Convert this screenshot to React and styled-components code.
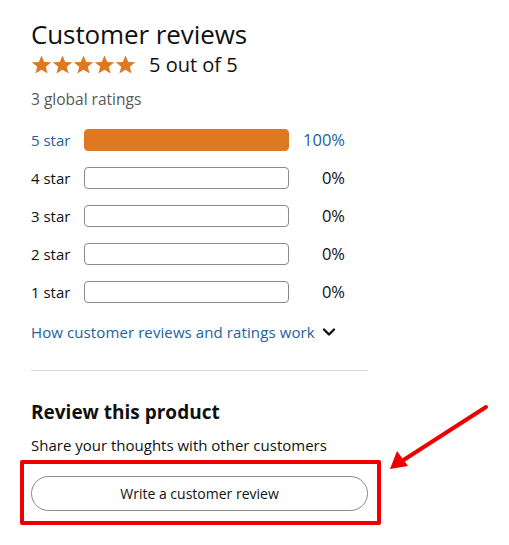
import React from "react";
import styled, { createGlobalStyle } from "styled-components";

const GlobalStyle = createGlobalStyle`
  html, body {
    margin: 0;
    padding: 0;
    background: #fff;
  }
  body {
    font-family: "Open Sans", "Noto Sans", "Liberation Sans", sans-serif;
    color: #0f1111;
  }
`;

const Page = styled.div`
  position: relative;
  width: 509px;
  height: 545px;
  overflow: hidden;
`;

const Column = styled.div`
  width: 337px;
  padding: 16px 0 0 31px;
  display: flex;
  flex-direction: column;
`;

const Title = styled.h2`
  margin: 0;
  font-size: 26px;
  font-weight: 400;
  line-height: 36px;
  letter-spacing: -0.1px;
`;

const StarLine = styled.div`
  display: flex;
  align-items: center;
  height: 24px;
  margin-top: 1px;
`;

const Stars = styled.div`
  display: flex;
  margin-right: 13px;
`;

const Score = styled.span`
  font-size: 20px;
  line-height: 24px;
`;

const Global = styled.div`
  margin-top: 12px;
  font-size: 15.5px;
  line-height: 20px;
  color: #565959;
`;

const Histogram = styled.div`
  margin-top: 19px;
  display: flex;
  flex-direction: column;
  gap: 16px;
  width: 314px;
`;

const Row = styled.div`
  display: grid;
  grid-template-columns: 53px 205px 56px;
  align-items: center;
  height: 22px;
  font-size: 15px;
  color: ${(p) => (p.$active ? "#2162a1" : "#0f1111")};
`;

const Meter = styled.div`
  height: 22px;
  box-sizing: border-box;
  border-radius: 4px;
  border: 1px solid ${(p) => (p.$fill ? "#de7921" : "#888c8c")};
  background: ${(p) => (p.$fill ? "#de7921" : "#fff")};
`;

const Pct = styled.span`
  text-align: right;
  font-size: 16.5px;
`;

const HowLink = styled.div`
  margin-top: 19px;
  display: flex;
  align-items: center;
  gap: 7px;
  font-size: 15px;
  line-height: 22px;
  letter-spacing: 0.1px;
  color: #2162a1;
`;

const Divider = styled.hr`
  margin: 27px 0 0;
  border: 0;
  border-top: 1px solid #d5d9d9;
  width: 337px;
`;

const SubTitle = styled.h3`
  margin: 28px 0 0;
  font-size: 19px;
  font-weight: 700;
  line-height: 26px;
`;

const Share = styled.div`
  margin-top: 9px;
  font-size: 15px;
  line-height: 22px;
`;

const WriteButton = styled.button`
  margin-top: 20px;
  width: 337px;
  height: 35px;
  border-radius: 18px;
  border: 1px solid #888c8c;
  background: #fff;
  font-family: inherit;
  font-size: 14px;
  color: #0f1111;
`;

const Highlight = styled.div`
  position: absolute;
  left: 20px;
  top: 460px;
  width: 361px;
  height: 65px;
  box-sizing: border-box;
  border: 4px solid #ee0000;
  border-radius: 2px;
`;

const Arrow = styled.svg`
  position: absolute;
  left: 0;
  top: 0;
`;

const Star = () => (
  <svg width="21" height="20" viewBox="0 0 24 23">
    <polygon
      points="12,0.5 15.1,8 23.2,8.4 16.9,13.5 19,21.4 12,17 5,21.4 7.1,13.5 0.8,8.4 8.9,8"
      fill="#de7921"
    />
  </svg>
);

const rows = [
  { label: "5 star", pct: 100 },
  { label: "4 star", pct: 0 },
  { label: "3 star", pct: 0 },
  { label: "2 star", pct: 0 },
  { label: "1 star", pct: 0 },
];

export default function App() {
  return (
    <Page>
      <GlobalStyle />
      <Column>
        <Title>Customer reviews</Title>
        <StarLine>
          <Stars>
            {[0, 1, 2, 3, 4].map((i) => (
              <Star key={i} />
            ))}
          </Stars>
          <Score>5 out of 5</Score>
        </StarLine>
        <Global>3 global ratings</Global>
        <Histogram>
          {rows.map((r) => (
            <Row key={r.label} $active={r.pct > 0}>
              <span>{r.label}</span>
              <Meter $fill={r.pct > 0} />
              <Pct>{r.pct}%</Pct>
            </Row>
          ))}
        </Histogram>
        <HowLink>
          How customer reviews and ratings work
          <svg width="14" height="10" viewBox="0 0 14 10">
            <path
              d="M2 2.5 L7 7.5 L12 2.5"
              fill="none"
              stroke="#0f1111"
              strokeWidth="2.4"
              strokeLinecap="round"
              strokeLinejoin="round"
            />
          </svg>
        </HowLink>
        <Divider />
        <SubTitle>Review this product</SubTitle>
        <Share>Share your thoughts with other customers</Share>
        <WriteButton>Write a customer review</WriteButton>
      </Column>
      <Highlight />
      <Arrow width="509" height="545" viewBox="0 0 509 545">
        <line
          x1="486"
          y1="407"
          x2="402"
          y2="461"
          stroke="#ee0000"
          strokeWidth="4"
          strokeLinecap="round"
        />
        <polygon points="390,469 397,451 408,466" fill="#ee0000" />
      </Arrow>
    </Page>
  );
}
